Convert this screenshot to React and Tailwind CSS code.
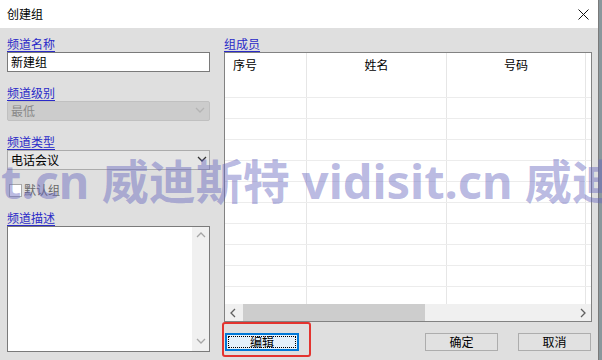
import React from "react";

const Chevron = ({ dir = "down", color = "#555", className = "" }) => {
  const pts = {
    down: "1,2 5,6 9,2",
    up: "1,6 5,2 9,6",
    left: "6,1 2,5 6,9",
    right: "3,1 7,5 3,9",
  }[dir];
  return (
    <svg width="10" height="10" viewBox="0 0 10 10" className={className}>
      <polyline points={pts} fill="none" stroke={color} strokeWidth="1.3" />
    </svg>
  );
};

const Label = ({ children }) => (
  <div className="h-[16px] leading-[16px] text-[12px] text-[#2a2ac8] underline underline-offset-[2px] decoration-[#2a2ac8]">
    {children}
  </div>
);

const Cells = ({ children = [null, null, null] }) => (
  <>
    <div className="w-[82px] h-full border-r border-[#e6e6e6] flex items-center pl-[8px]">{children[0]}</div>
    <div className="w-[140px] h-full border-r border-[#e6e6e6] flex items-center justify-center">{children[1]}</div>
    <div className="w-[139px] h-full border-r border-[#e6e6e6] flex items-center justify-center">{children[2]}</div>
  </>
);

export default function App() {
  const rows = Array.from({ length: 10 });
  return (
    <div className="relative w-[602px] h-[360px] overflow-hidden flex bg-[#dfdfdf] text-black font-['Noto_Sans_CJK_SC',sans-serif]">
      <div className="w-[598px] h-full flex flex-col">
        {/* title bar */}
        <div className="h-[28px] bg-white flex items-center justify-between pl-[7px] pr-[9px]">
          <span className="text-[12px] leading-[14px]">创建组</span>
          <svg width="11" height="11" viewBox="0 0 11 11">
            <path d="M0.5 0.5 L10.5 10.5 M10.5 0.5 L0.5 10.5" stroke="#111" strokeWidth="1" />
          </svg>
        </div>
        {/* body */}
        <div className="flex-1 flex pl-[7px] pt-[8px]">
          {/* left column */}
          <div className="w-[203px] flex flex-col">
            <Label>频道名称</Label>
            <div className="h-[20px] border border-[#7a7a7a] bg-white px-[3px] text-[12px] leading-[18px]">新建组</div>
            <div className="mt-[13px]">
              <Label>频道级别</Label>
            </div>
            <div className="h-[20px] border border-[#c0c0c0] rounded-[2px] bg-[#cccccc] pl-[3px] pr-[4px] flex items-center justify-between text-[12px] text-[#8a8a8a]">
              <span>最低</span>
              <Chevron dir="down" color="#b4b4b4" />
            </div>
            <div className="mt-[13px]">
              <Label>频道类型</Label>
            </div>
            <div className="h-[20px] border border-[#acacac] bg-[#e5e5e5] pl-[3px] pr-[2px] flex items-center justify-between text-[12px]">
              <span>电话会议</span>
              <Chevron dir="down" color="#333" />
            </div>
            <div className="h-[40px] flex items-center">
              <div className="w-[13px] h-[13px] border border-[#a8a8a8] bg-white ml-[2px]" />
              <span className="ml-[2px] text-[12px] text-[#6a6a6a]">默认组</span>
            </div>
            <Label>频道描述</Label>
            <div className="h-[126px] border border-[#7a7a7a] bg-white flex justify-end">
              <div className="w-[17px] h-full bg-[#f0f0f0] flex flex-col items-center justify-between py-[4px]">
                <Chevron dir="up" color="#a6a6a6" />
                <Chevron dir="down" color="#a6a6a6" />
              </div>
            </div>
          </div>
          {/* right column */}
          <div className="ml-[14px] w-[368px] flex flex-col">
            <Label>组成员</Label>
            <div className="h-[270px] border border-[#828282] bg-white flex flex-col">
              <div className="h-[24px] flex text-[12px]">
                <Cells>{["序号", "姓名", "号码"]}</Cells>
              </div>
              {rows.map((_, i) => (
                <div key={i} className="h-[21px] flex border-b border-[#ececec]">
                  <Cells />
                </div>
              ))}
              <div className="flex-1 flex">
                <Cells />
              </div>
              <div className="h-[17px] bg-[#f0f0f0] flex items-center">
                <div className="w-[17px] h-full flex items-center justify-center">
                  <Chevron dir="left" color="#606060" />
                </div>
                <div className="ml-[1px] w-[182px] h-full bg-[#cdcdcd]" />
                <div className="flex-1" />
                <div className="w-[17px] h-full flex items-center justify-center">
                  <Chevron dir="right" color="#606060" />
                </div>
              </div>
            </div>
            <div className="mt-[11px] flex justify-between pl-[1px] pr-[1px]">
              <div className="relative">
                <button className="relative w-[74px] h-[18px] border-2 border-[#0078d7] bg-[#e5f1fb] text-[12px] leading-[14px] flex items-center justify-center">
                  <span className="absolute inset-[1px] border border-dotted border-black" />
                  <span className="relative">编辑</span>
                </button>
                <div className="absolute left-[-3px] top-[-11px] w-[89px] h-[35px] border-2 border-[#e3342f] rounded-[3px]" />
              </div>
              <div className="flex gap-[20px]">
                <button className="w-[73px] h-[18px] border border-[#adadad] bg-[#e1e1e1] text-[12px] leading-[14px]">确定</button>
                <button className="w-[73px] h-[18px] border border-[#adadad] bg-[#e1e1e1] text-[12px] leading-[14px]">取消</button>
              </div>
            </div>
          </div>
        </div>
      </div>
      <div className="w-[4px] h-full border-l border-[#7a7a7a] bg-[#8a979c]" />
      {/* watermark */}
      <div className="pointer-events-none absolute left-[1px] top-[151px] whitespace-nowrap text-[47px] leading-[60px] font-bold text-[rgba(100,100,190,0.45)] font-['Noto_Sans','Noto_Sans_CJK_SC',sans-serif]">
        t.cn 威迪斯特 vidisit.cn 威迪斯特
      </div>
    </div>
  );
}
